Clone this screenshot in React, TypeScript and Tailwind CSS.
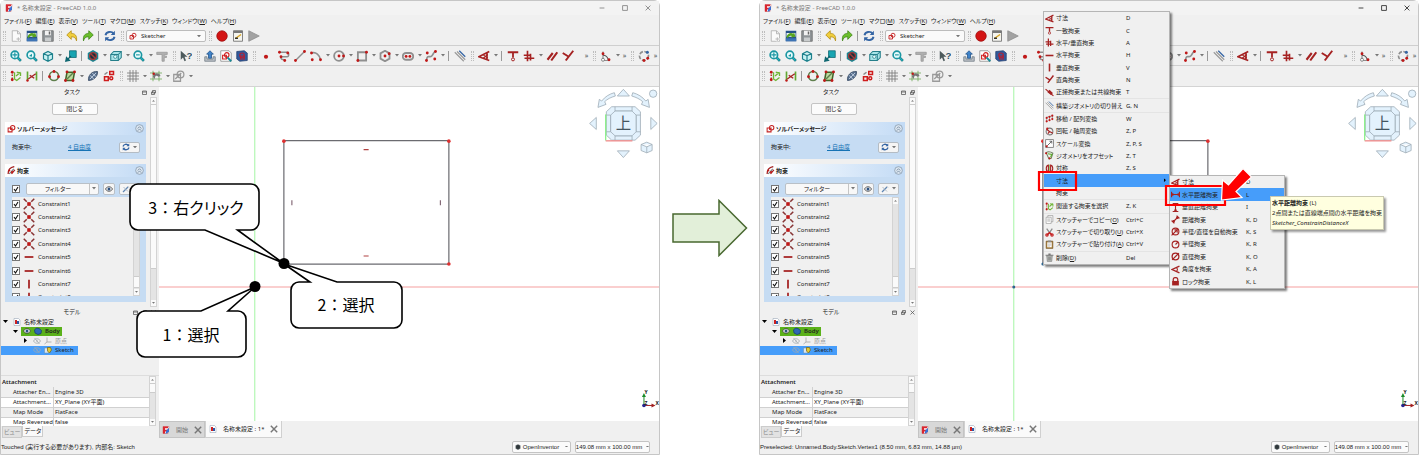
import type { ReactNode } from 'react';
import { clsx } from 'clsx';

const R = '#a52222';
const G = '#8f8f8f';

const Dot = ({ x, y, r = 1.9 }: { x: number; y: number; r?: number }) => (
  <circle cx={x} cy={y} r={r} fill="#c01818" />
);

const magnifier = (
  <>
    <path d="M9.5 9.5l5 5" stroke="#0b5c66" strokeWidth="3.4" />
    <path d="M9.5 9.5l4.600 4.600" stroke="#20aeba" strokeWidth="2.200" />
    <circle cx="6.500" cy="6.500" r="5" fill="#e8fbfc" stroke="#1b96a2" strokeWidth="2.200" />
  </>
);

const cube = (
  <path
    d="M2 5l6-3 6 3v7l-6 3-6-3zM2 5l6 2.500L14 5M8 7.500V15"
    fill="#c9f2f4"
    stroke="#1c808c"
    strokeWidth="1.600"
  />
);

const sketchMark = (
  <g fill="none" stroke="#c42020" strokeWidth="1.800">
    <path d="M2 7h7v7H2z" />
    <circle cx="10" cy="6.500" r="4" />
    <path d="M5 11l4-4" strokeWidth="1.200" />
  </g>
);

const icons: Record<string, ReactNode> = {
  app: (
    <>
      <path d="M2 1h12l-2 14H2z" fill="#fff" stroke="#c94848" strokeWidth="1" />
      <path d="M2 1h10v3.500H6v3h4V11H6v4H2z" fill="#d9252f" />
      <path d="M9 8l5-4v7l-4 4H7z" fill="#3b6fd1" />
    </>
  ),
  new: (
    <>
      <path d="M3 1h7l4 4v10H3z" fill="#fafafa" stroke="#a5a5a5" />
      <path d="M10 1v4h4" fill="none" stroke="#a5a5a5" />
      <path d="M11 9v6M8 12h6" stroke="#fff" strokeWidth="3" />
      <path d="M11 9.500v5M8.500 12h5" stroke="#b9b9b9" strokeWidth="1.400" />
    </>
  ),
  open: (
    <>
      <path d="M1 1h14v14H1z" fill="#27528a" />
      <path d="M2 4h12v5H2z" fill="#eef2f5" />
      <path d="M2 9c2-5 6-6 9-4l1-2 2 6-6 1 1-2c-2-1-4 0-6 3z" fill="#57a41f" />
      <path d="M1 11h14v4H1z" fill="#3d74b5" />
    </>
  ),
  save: (
    <>
      <path d="M1 1h14v14H1z" fill="#8f9497" stroke="#666" />
      <path d="M4 1h8v6H4z" fill="#f2f2f2" />
      <path d="M4 10h8v5H4z" fill="#c9cccd" />
      <path d="M9 2h2v4H9z" fill="#666" />
    </>
  ),
  undo: <path d="M1 6.500L7 1v3.500c5 0 8 3 7 10-1-4-3-5.500-7-5.500v3.500z" fill="#f0ce3d" stroke="#b08a10" />,
  redo: <path d="M15 6.500L9 1v3.500c-5 0-8 3-7 10 1-4 3-5.500 7-5.500v3.500z" fill="#6bbf2b" stroke="#3c8214" />,
  refresh: (
    <g fill="none" stroke="#3465a4" strokeWidth="2.600">
      <path d="M2 7c1-5 8-6 11-2M14 9c-1 5-8 6-11 2" />
      <path d="M14.500 1v5.500H9zM1.500 15V9.500H7z" fill="#3465a4" stroke="none" />
    </g>
  ),
  record: <circle cx="8" cy="8" r="7" fill="#d31414" stroke="#9c0f0f" />,
  edit: (
    <>
      <path d="M2 1h12v14H2z" fill="#f4f4ee" stroke="#777" strokeWidth="1.200" />
      <path d="M2 1h12v3H2z" fill="#777" />
      <path d="M5 11l7-5" stroke="#d9a520" strokeWidth="2" />
      <path d="M4 11h4" stroke="#222" strokeWidth="1.800" />
    </>
  ),
  play: <path d="M1 1l14 7-14 7z" fill="#a2a2a2" stroke="#8c8c8c" />,
  fit: (
    <>
      {magnifier}
      <path d="M6.500 3v7M3 6.500h7" stroke="#1b96a2" strokeWidth="1.500" />
    </>
  ),
  zoomSel: (
    <>
      {magnifier}
      <path d="M4 8l4-3v4z" fill="#1b96a2" />
    </>
  ),
  zoom: (
    <>
      {magnifier}
      <path d="M4 6.500h5" stroke="#1b96a2" strokeWidth="1.500" />
    </>
  ),
  iso: cube,
  box: (
    <>
      <path d="M1 6l4-4h10v8l-4 4H1z" fill="#a8e4e8" stroke="#257f8a" strokeWidth="1.400" />
      <path d="M1 6h10v8M11 6l4-4" fill="none" stroke="#257f8a" strokeWidth="1.400" />
      <circle cx="7" cy="9" r="2.200" fill="#e8fbfc" stroke="#257f8a" />
    </>
  ),
  align: (
    <>
      <path d="M6 1h9v9H6z" fill="#18a4b1" stroke="#0d6670" />
      <path d="M1 15l5-1-4-4zM4 12l4-4" fill="#0d6670" stroke="#0d6670" strokeWidth="1.600" />
    </>
  ),
  noSign: (
    <>
      <path d="M8 0l7 4v8l-7 4-7-4V4z" fill="#1a8592" />
      <circle cx="8" cy="8" r="4.600" fill="#1b3038" stroke="#a33a3a" strokeWidth="1.800" />
      <path d="M5 5l6 6" stroke="#a33a3a" strokeWidth="1.800" />
    </>
  ),
  measure: (
    <path d="M1 3h14v3h-4v2h3v2h-3v5H8V6H1z" fill="#b0b0b0" stroke="#989898" strokeWidth="1" />
  ),
  whats: (
    <>
      <path d="M1 1l9 8H6l2 5-2 1-2-5-3 3z" fill="#4d5a5c" />
      <text x="8.500" y="12" fontSize="13" fontWeight="bold" fill="#33556b" fontFamily="Liberation Sans">
        ?
      </text>
    </>
  ),
  leave: (
    <>
      <path d="M1 9v6h14V9h-3v3H4V9z" fill="#b9bfc4" stroke="#6f7a82" />
      <path d="M8 1l4.500 4.500H10V11H6V5.500H3.500z" fill="#3f83c9" stroke="#1e4f85" />
    </>
  ),
  viewSketch: (
    <>
      <path d="M1 1h11l3 3v11H1z" fill="#fff" stroke="#888" />
      <circle cx="9" cy="6.500" r="3" fill="none" stroke="#d02020" strokeWidth="1.500" />
      <path d="M3.500 7h5v5h-5z" fill="none" stroke="#d02020" strokeWidth="1.500" />
      <path d="M10 10l5 5" stroke="#178995" strokeWidth="2.400" />
    </>
  ),
  section: (
    <>
      <path d="M1 2l10-1 4 3v10l-10 1-4-3z" fill="#315a9c" stroke="#243f6d" />
      <circle cx="8" cy="7" r="3" fill="none" stroke="#b02035" strokeWidth="1.500" />
      <path d="M6 8h5v4H6z" fill="none" stroke="#b02035" strokeWidth="1.500" />
    </>
  ),
  point: <Dot x={8} y={9} r={2.8} />,
  polyline: (
    <>
      <path d="M2 3h10c3 0 3 6 0 6H6c-3 0-3 4 2 4" fill="none" stroke={G} strokeWidth="2" />
      <Dot x={2} y={3} />
      <Dot x={13} y={4} />
      <Dot x={4} y={9} />
      <Dot x={9} y={14} />
    </>
  ),
  line: (
    <>
      <path d="M2 14L14 2" stroke={G} strokeWidth="2" />
      <Dot x={2} y={14} />
      <Dot x={14} y={2} />
    </>
  ),
  arc: (
    <>
      <path d="M2 4c6-2 11 3 12 9" fill="none" stroke={G} strokeWidth="2.200" />
      <Dot x={2} y={4} />
      <Dot x={14} y={13} />
      <Dot x={3} y={13} />
    </>
  ),
  circle: (
    <>
      <circle cx="8" cy="8" r="6.500" fill="none" stroke={G} strokeWidth="2.400" />
      <Dot x={8} y={8} />
      <Dot x={14} y={8} />
    </>
  ),
  rect: (
    <>
      <path d="M2.500 3h11v11h-11z" fill="none" stroke={G} strokeWidth="2.400" />
      <Dot x={14} y={3} />
      <Dot x={2.5} y={14} />
    </>
  ),
  hexagon: (
    <>
      <path d="M8 1l6 3.500v7L8 15l-6-3.500v-7z" fill="none" stroke={G} strokeWidth="2.400" />
      <Dot x={8} y={8} />
      <Dot x={13.5} y={5} />
    </>
  ),
  slot: (
    <>
      <rect x="1" y="4" width="14" height="9" rx="4.500" fill="none" stroke={G} strokeWidth="2.400" />
      <Dot x={5.5} y={8.5} />
      <Dot x={10.5} y={8.5} />
    </>
  ),
  spline: (
    <>
      <path d="M2 14c1-9 4-3 7-6s2-5 5-6" fill="none" stroke={G} strokeWidth="2.200" />
      <Dot x={2} y={14} />
      <Dot x={14} y={2} />
      <Dot x={3} y={4} />
      <Dot x={13} y={12} />
    </>
  ),
  construction: (
    <>
      <path d="M1 3l12 12M4 2l11 11" stroke="#999" strokeWidth="1.500" />
      <path d="M7 1l8 8" stroke="#3465a4" strokeWidth="1.600" />
    </>
  ),
  dimension: (
    <g fill="none" stroke={R}>
      <path d="M15 2L1 9l14 5M12 4v9" strokeWidth="2.200" />
      <path d="M7 6.500l6 4M7 11l6-5" strokeWidth="1.400" />
    </g>
  ),
  coincident: (
    <g fill="none" stroke={R}>
      <path d="M1 3h14M8 3v7" strokeWidth="2.400" />
      <circle cx="8" cy="12.500" r="2" strokeWidth="1.300" />
    </g>
  ),
  horVer: <path d="M6 1v14M1 7h9M2 11h13M10 5v9" stroke={R} strokeWidth="2.200" />,
  parallel: <path d="M2 13L9 4M7 14l8-11" stroke={R} strokeWidth="2.800" />,
  perpendicular: <path d="M15 1L5 14M1 4l8 5" fill="none" stroke={R} strokeWidth="2.600" />,
  horizontal: <path d="M1 8h14" stroke={R} strokeWidth="2.800" />,
  vertical: <path d="M8 1v14" stroke={R} strokeWidth="2.800" />,
  tangent: (
    <>
      <path d="M1 2l14 12" stroke={R} strokeWidth="2" />
      <path d="M4 7l4-4 6 6-3 4z" fill={R} />
    </>
  ),
  snapAngle: (
    <>
      <path d="M4 2v12h9" fill="none" stroke={G} strokeWidth="1.600" />
      <path d="M4 7c4 0 6 2 7 6" fill="none" stroke="#555" strokeWidth="1.400" />
      <Dot x={4} y={5} />
      <Dot x={12} y={13} />
      <circle cx="4" cy="13" r="2" fill="#fff" stroke="#666" />
    </>
  ),
  ring: (
    <>
      <circle cx="8" cy="8" r="6" fill="none" stroke={G} strokeWidth="2.200" strokeDasharray="5 2" />
      <circle cx="12.500" cy="3" r="2" fill="#3465a4" />
      <Dot x={13} y={11} />
      <Dot x={8} y={14} />
    </>
  ),
  selectConstraint: (
    <>
      <path d="M3 2v12" stroke="#b33" strokeWidth="2" strokeDasharray="2 2" />
      <Dot x={3} y={3} />
      <Dot x={3} y={13} />
      <path d="M6 3v9l3 2 5-4M8 8l6-5M9 3l5 1v4" fill="none" stroke="#6fb536" strokeWidth="1.800" />
    </>
  ),
  selectElement: (
    <>
      <path d="M2 2v12M14 2v12" stroke="#62a833" strokeWidth="2.200" />
      <path d="M3 12L13 5M5 7l6 4" stroke={R} strokeWidth="1.800" />
      <Dot x={2} y={14} r={1.6} />
    </>
  ),
  greenCircle: (
    <>
      <circle cx="8" cy="8" r="6" fill="none" stroke="#5f7f4d" strokeWidth="2.200" />
      <Dot x={8} y={2} />
      <Dot x={2} y={9} />
      <Dot x={14} y={9} />
    </>
  ),
  greenRect: (
    <>
      <path d="M4 3h10l-2 11H2z" fill="#bddb9f" stroke="#43632a" strokeWidth="2" />
      <path d="M4 12l8-8" stroke="#5f7f4d" strokeWidth="2" />
      <Dot x={4} y={2.5} />
      <Dot x={14} y={2.5} />
      <Dot x={2} y={14} />
      <Dot x={12} y={14} />
    </>
  ),
  blueShape: (
    <>
      <path d="M2 14C1 7 7 1 14 2c1 6-5 12-12 12z" fill="#59718f" stroke="#2d425c" />
      <path d="M4 12l8-8M4 7l5 5M7 4l5 5" stroke="#c6d4e4" strokeWidth="1.200" />
    </>
  ),
  redShapes: (
    <g fill="none" stroke="#cf1d1d" strokeWidth="2">
      <path d="M2 9h5v5H2zM9 2h5v4H9z" />
      <circle cx="11" cy="11" r="2" />
      <path d="M2 6l4-3" stroke="#888" />
    </g>
  ),
  grid: <path d="M4 0v16M8 0v16M12 0v16M0 4h16M0 8h16M0 12h16" stroke="#777" strokeWidth="1.100" />,
  gridSnap: (
    <>
      <path d="M4 1v14M12 1v14M0 4h16M0 12h16" stroke="#72aa5c" strokeWidth="1.100" />
      <path d="M4 9c0-6 9-6 10-1l-3 1c-1-2-4-2-4 0l-1 3z" fill="#777" />
      <Dot x={5} y={5} r={1.6} />
    </>
  ),
  renderOrder: (
    <g fill="none" stroke="#9a9a9a" strokeWidth="1.700">
      <path d="M1 6h9v9H1zM3 12l8-8" />
      <circle cx="10" cy="6" r="4.500" />
    </g>
  ),
  sketcher: sketchMark,
  constraintGroup: (
    <>
      <path d="M2 14C2 7 6 2 13 1M8 14L14 7" fill="none" stroke={R} strokeWidth="2.200" />
      <path d="M4 14l8-9" stroke="#777" strokeWidth="1.800" />
      <Dot x={4} y={8} />
      <Dot x={9} y={11} />
    </>
  ),
  cross: (
    <>
      <path d="M1 1l4 4M15 1l-4 4M1 15l4-4M15 15l-4-4" stroke="#873333" strokeWidth="2" />
      <path d="M5 5l6 6M11 5l-6 6" stroke="#ad6c6c" strokeWidth="1" />
      <Dot x={8} y={8} r={2.6} />
    </>
  ),
  move: (
    <>
      <path d="M3 9v5M8 5v7M13 2v7M3 6l10-3" stroke={G} strokeWidth="1.500" />
      <Dot x={3} y={13} />
      <Dot x={3} y={7} />
      <Dot x={8} y={5} />
      <Dot x={8} y={11} />
      <Dot x={13} y={3} />
      <Dot x={13} y={9} />
    </>
  ),
  rotate: (
    <>
      <circle cx="8" cy="8" r="6" fill="none" stroke="#777" strokeWidth="1.800" />
      <path d="M3 4l5 4-3 4M8 8l6 3" fill="none" stroke={R} strokeWidth="2.200" />
      <Dot x={4} y={3} />
    </>
  ),
  scale: (
    <>
      <path d="M1 1h14v14H1z" fill="#fff" stroke="#777" strokeWidth="1.500" />
      <path d="M4 12l8-8M8 4h4v4" fill="none" stroke="#555" strokeWidth="1.500" />
      <Dot x={3} y={13} />
    </>
  ),
  offset: (
    <>
      <path d="M2 3c4-3 8-2 12 1l-3 9-4 1z" fill="none" stroke="#6c7f5e" strokeWidth="1.800" />
      <path d="M5 5l7 1-2 5" fill="none" stroke="#5bab29" strokeWidth="2" />
      <Dot x={2} y={4} />
      <Dot x={8} y={13} />
    </>
  ),
  mirror: (
    <>
      <path d="M6 2C1 3 1 13 6 14zM10 2c5 1 5 11 0 12z" fill="none" stroke={R} strokeWidth="2" />
      <path d="M8 1v14" stroke="#6eb13c" strokeWidth="1.200" />
    </>
  ),
  copy: (
    <>
      <path d="M5 1h9v11H5z" fill="#f7f7f7" stroke="#888" />
      <path d="M2 4h9v11H2z" fill="#fff" stroke="#888" />
      <path d="M4 7h5M4 9h5M4 11h5" stroke="#999" />
    </>
  ),
  cut: (
    <>
      <path d="M3 1l7 10M13 1L6 11" stroke="#8a8a8a" strokeWidth="2.200" />
      <path d="M8 8l-4 4M8 8l4 4" stroke="#c41c1c" strokeWidth="2.400" />
      <circle cx="3.500" cy="12.500" r="2" fill="none" stroke="#c41c1c" strokeWidth="2.200" />
      <circle cx="12.500" cy="12.500" r="2" fill="none" stroke="#c41c1c" strokeWidth="2.200" />
    </>
  ),
  paste: (
    <>
      <path d="M2 2h12v13H2z" fill="#a87b35" stroke="#6f5020" />
      <path d="M4 4h8v9H4z" fill="#fff" />
      <path d="M5 1h6v3H5z" fill="#888" />
      <path d="M5 7h6M5 9h6M5 11h4" stroke="#aaa" />
    </>
  ),
  trash: (
    <>
      <path d="M3 5h10l-1 10H4z" fill="#b5b9b5" stroke="#777" />
      <path d="M1 4h14M6 2h4" stroke="#777" strokeWidth="2" />
      <path d="M6 7v6M8 7v6M10 7v6" stroke="#777" />
    </>
  ),
  distX: <path d="M1 3v10M15 3v10M2 8h12M4 6L2 8l2 2M12 6l2 2-2 2" fill="none" stroke={R} strokeWidth="2" />,
  distY: <path d="M3 1h10M3 15h10M8 2v12M6 4l2-2 2 2M6 12l2 2 2-2" fill="none" stroke={R} strokeWidth="2" />,
  distance: <path d="M1 10l5 5M10 1l5 5M4 12l8-8M4 9v3h3M9 4h3v3" fill="none" stroke={R} strokeWidth="2" />,
  radiam: (
    <g fill="none" stroke={R} strokeWidth="2">
      <circle cx="8" cy="8" r="6" />
      <path d="M1 15L12 4M6 5h5v5" />
    </g>
  ),
  radius: (
    <g fill="none" stroke={R} strokeWidth="2">
      <circle cx="8" cy="8" r="6" />
      <path d="M8 8l4-4" />
    </g>
  ),
  diameter: (
    <g fill="none" stroke={R} strokeWidth="2.200">
      <circle cx="8" cy="8" r="6" />
      <path d="M2 14L14 2" />
    </g>
  ),
  angle: (
    <g fill="none" stroke={R} strokeWidth="2.400">
      <path d="M15 2L2 8l13 6" />
      <path d="M10 5c2 2 2 4 0 6" strokeWidth="1.800" />
    </g>
  ),
  lock: (
    <>
      <path d="M4 7V4c0-4 8-4 8 0v3" fill="none" stroke={R} strokeWidth="2.200" />
      <path d="M2 7h12v8H2z" fill={R} />
    </>
  ),
  doc: (
    <>
      <path d="M2 1h9l3 3v11H2z" fill="#fff" stroke="#8a98ad" />
      <path d="M4 4h4v8H4z" fill="#cf2020" />
      <path d="M8 6h4v6H8z" fill="#2c58a8" />
    </>
  ),
  body: <path d="M1 6l4-4 5 1 5 4-1 6-6 2-6-3z" fill="#2e68b4" stroke="#163c71" strokeWidth="1.500" />,
  axes: <path d="M6 1v9h9M6 10l-5 4" fill="none" stroke="#aaa" strokeWidth="1.700" />,
  sketchItem: (
    <>
      <path d="M1 4h9v10H1z" fill="#d9e6f2" stroke="#6588a5" />
      <path d="M7 3h6l2 5-4 6-4-4z" fill="#e5c82e" stroke="#75691a" strokeWidth="1.500" />
    </>
  ),
  eye: (
    <>
      <path d="M1 8c3-6 11-6 14 0-3 6-11 6-14 0z" fill="#fff" stroke="#333" strokeWidth="1.500" />
      <circle cx="8" cy="8" r="3" fill="#2a5080" />
    </>
  ),
  hidden: (
    <path d="M1 8c3-6 11-6 14 0-3 6-11 6-14 0zM3 2l10 12M6 8h4" fill="none" stroke="#a2a9ad" strokeWidth="1.500" />
  ),
  settings: (
    <>
      <path d="M2 14L12 4" stroke="#5f86b3" strokeWidth="2.600" />
      <path d="M3 4l9 9M11 2l3 3" stroke="#b3bdc7" strokeWidth="2" />
    </>
  ),
  chip: <path d="M8 1l6 3v8l-6 3-6-3V4z" fill="#30383b" stroke="#7c8588" />,
};

function Icon({ name, className = 'size-3' }: { name: string; className?: string }) {
  return (
    <svg viewBox="0 0 16 16" className={clsx('shrink-0', className)} aria-hidden="true">
      {icons[name]}
    </svg>
  );
}

const Caret = ({ className = 'w-[5px]' }: { className?: string }) => (
  <svg viewBox="0 0 10 6" className={clsx('shrink-0', className)} aria-hidden="true">
    <path d="M0 0h10L5 6z" fill="#777" />
  </svg>
);

// '::' grip, '|' separator, 'v' drop-down caret, '»' overflow
const mainTools = ['::', 'new', 'open', 'save', '::', 'undo', 'redo', '|', 'refresh', '::'];
const macroTools = ['::', 'record', 'edit', 'play'];
const viewTools = [
  '::', 'fit', 'zoomSel', 'iso', 'v', 'align', '|', 'noSign', 'v', 'box', 'v', 'zoom', 'v', 'measure',
  '::', 'whats', '::', 'leave', 'viewSketch', 'section', '::', 'point',
];
const geometryTools = [
  'polyline', 'line', 'arc', 'v', 'circle', 'v', 'rect', 'v', 'hexagon', 'v', 'slot', 'v', 'spline', 'v',
  '|', 'construction', '::', 'dimension', 'v', '|', 'coincident', 'horVer', 'v', 'parallel', 'perpendicular',
];
const trailingTools = ['»', '::', 'snapAngle', 'v', '»', '::', 'ring', '»'];
const sketchTools = [
  '::', 'selectConstraint', 'selectElement', '|', 'greenCircle', 'greenRect', 'v', 'blueShape', 'redShapes',
  '::', 'grid', 'v', 'gridSnap', 'v', 'renderOrder', 'v',
];

function Tools({ items }: { items: string[] }) {
  return (
    <div className="flex shrink-0 items-center">
      {items.map((item, i) => {
        if (item === '::')
          return (
            <span
              key={i}
              className="mr-[2px] ml-[3px] h-2.5 w-[3px] shrink-0 border-x border-dotted border-[#bdbdbd] first:ml-0"
            />
          );
        if (item === '|') return <span key={i} className="mr-[3px] ml-[2px] h-2.5 w-px shrink-0 bg-[#999]" />;
        if (item === 'v')
          return (
            <button key={i} type="button" aria-label="More" className="flex w-[7px] shrink-0 justify-center">
              <Caret className="w-1" />
            </button>
          );
        if (item === '»')
          return (
            <button key={i} type="button" className="w-[7px] shrink-0 text-center text-[7px] leading-none text-[#555]">
              »
            </button>
          );
        return (
          <button key={i} type="button" aria-label={item} className="flex w-4 shrink-0 justify-center">
            <Icon name={item} />
          </button>
        );
      })}
    </div>
  );
}

const menus = [
  ['ファイル', 'F'],
  ['編集', 'E'],
  ['表示', 'V'],
  ['ツール', 'T'],
  ['マクロ', 'M'],
  ['スケッチ', 'K'],
  ['ウィンドウ', 'W'],
  ['ヘルプ', 'H'],
];

function Header({ active }: { active: boolean }) {
  return (
    <header>
      <div className="flex h-[14px] items-center gap-1 bg-[#f3f3f3] pr-2 pl-1 text-[#777]">
        <Icon name="app" className="size-2" />
        <h1>* 名称未設定 - FreeCAD 1.0.0</h1>
        <div className={clsx('ml-auto flex gap-[17px]', active ? 'text-[#333]' : 'text-[#888]')}>
          {['M1 5h8', 'M1 1h8v8H1z', 'M1 1l8 8M9 1L1 9'].map((d, i) => (
            <button key={d} type="button" aria-label={['Minimize', 'Maximize', 'Close'][i]}>
              <svg viewBox="0 0 10 10" className="size-1.5">
                <path d={d} fill="none" stroke="currentColor" strokeWidth="1.5" />
              </svg>
            </button>
          ))}
        </div>
      </div>
      <nav className="flex h-3 items-center gap-1 pl-[3px]">
        {menus.map(([label, key]) => (
          <button key={label} type="button" className="whitespace-nowrap">
            {label}(<u>{key}</u>)
          </button>
        ))}
      </nav>
      <div className="flex h-[19px] items-center border-b border-[#cfcfcf] pl-[2px]">
        <Tools items={mainTools} />
        <div className="mr-[3px] flex h-3 w-20 shrink-0 items-center gap-1 rounded-xs border border-[#bcbcbc] bg-[#fafafa] px-[2px]">
          <Icon name="sketcher" className="size-2" />
          <select aria-label="Workbench" className="min-w-0 flex-1 appearance-none">
            <option>Sketcher</option>
          </select>
          <Caret className="mr-[2px] w-1" />
        </div>
        <Tools items={macroTools} />
      </div>
      <div className="flex h-5 items-center overflow-hidden border-b border-[#cfcfcf] pl-[2px]">
        <Tools items={viewTools} />
        <div className="ml-[2px] shrink-0">
          <Tools items={geometryTools} />
        </div>
        <div className="ml-auto shrink-0">
          <Tools items={trailingTools} />
        </div>
      </div>
      <div className="flex h-[21px] items-center border-b border-[#d4d4d4] pl-[2px]">
        <Tools items={sketchTools} />
      </div>
    </header>
  );
}

function DockTitle({ title, closable }: { title: string; closable?: boolean }) {
  return (
    <div className="relative flex h-2.5 shrink-0 items-center justify-center pr-4">
      <h2>{title}</h2>
      <div className="absolute right-[3px] flex gap-1 text-[#555]">
        {['M1 2h8v7H1zM1 4h8', 'M3 1h6v5H3zM1 4h6v5H1z', 'M1 1l8 8M9 1L1 9'].slice(0, closable ? 3 : 2).map((d) => (
          <button key={d} type="button" aria-label="Dock control">
            <svg viewBox="0 0 10 10" className="size-[5px]">
              <path d={d} fill="none" stroke="currentColor" strokeWidth="1.500" />
            </svg>
          </button>
        ))}
      </div>
    </div>
  );
}

function ScrollBar({ thumb }: { thumb: string }) {
  return (
    <div className="flex w-[7px] shrink-0 flex-col border border-[#d3d3d3] bg-[#e4e4e4]">
      <span className="flex h-[6px] items-center justify-center bg-[#fafafa]">
        <Caret className="w-[3px] rotate-180" />
      </span>
      <span className={clsx('border-y border-[#ccc] bg-[#fafafa]', thumb)} />
      <span className="mt-auto flex h-[6px] items-center justify-center bg-[#fafafa]">
        <Caret className="w-[3px]" />
      </span>
    </div>
  );
}

function PanelHead({ icon, title }: { icon: string; title: string }) {
  return (
    <div className="flex h-[13px] items-center gap-px bg-linear-to-r from-white to-[#c3dbf5] px-[2px]">
      <Icon name={icon} className="size-[9px]" />
      <h3 className="font-bold">{title}</h3>
      <button type="button" aria-label="Collapse" className="ml-auto">
        <svg viewBox="0 0 10 10" className="size-[9px]">
          <circle cx="5" cy="5" r="4.300" fill="#dbe6f1" stroke="#8395a7" strokeWidth="0.800" />
          <path d="M3 5l2-2 2 2M3 7.500l2-2 2 2" fill="none" stroke="#71869b" strokeWidth="0.900" />
        </svg>
      </button>
    </div>
  );
}

const Check = ({ label }: { label: string }) => (
  <span className="relative flex size-2 shrink-0">
    <input
      type="checkbox"
      defaultChecked
      aria-label={label}
      className="size-2 appearance-none border border-[#777] bg-white"
    />
    <svg viewBox="0 0 8 8" className="pointer-events-none absolute inset-0">
      <path d="M2 4l1.500 2L6 2" fill="none" stroke="#111" strokeWidth="1.100" />
    </svg>
  </span>
);

const constraints = ['cross', 'cross', 'cross', 'cross', 'horizontal', 'horizontal', 'vertical', 'vertical'];

function TaskPanel() {
  return (
    <div className="flex h-[210px] shrink-0">
      <div className="min-w-0 flex-1 pr-1 pl-1">
        <div className="pt-[6px] pr-[2px] text-center">
          <button type="button" className="h-3 w-[46px] rounded-xs border border-[#c4c4c4] bg-[#fbfbfb] leading-[10px]">
            閉じる
          </button>
        </div>
        <section className="mt-[7px] bg-[#c6dcf3]">
          <PanelHead icon="sketcher" title="ソルバーメッセージ" />
          <div className="flex h-6 items-center pr-1.5 pl-[7px]">
            <span>拘束中:</span>
            <a href="#dof" className="ml-auto text-[#1673b5] underline">
              4 自由度
            </a>
            <button
              type="button"
              aria-label="Update"
              className="ml-[28px] flex h-[11px] w-[21px] items-center justify-between rounded-xs border border-[#b4bcc4] bg-[#f5f5f5] px-[2px]"
            >
              <Icon name="refresh" className="size-2" />
              <Caret className="w-1" />
            </button>
          </div>
        </section>
        <section className="mt-[5px] bg-[#c6dcf3] pb-[6px]">
          <PanelHead icon="constraintGroup" title="拘束" />
          <div className="flex h-[20px] items-center gap-1 pt-[3px] pr-1.5 pl-[7px]">
            <Check label="Show all" />
            <div className="ml-[2px] flex h-3 flex-1 items-center rounded-xs border border-[#b9c0c7] bg-[#f8f8f8]">
              <select aria-label="Filter" className="w-full flex-1 appearance-none text-center">
                <option>フィルター</option>
              </select>
              <span className="flex h-full w-[9px] items-center justify-center border-l border-[#c5c5c5]">
                <Caret className="w-1" />
              </span>
            </div>
            <button
              type="button"
              aria-label="Visibility"
              className="flex size-3 items-center justify-center rounded-xs border border-[#b9c0c7] bg-[#f5f5f5]"
            >
              <Icon name="eye" className="size-2" />
            </button>
            <button
              type="button"
              aria-label="Settings"
              className="flex h-3 w-[21px] items-center justify-between rounded-xs border border-[#b9c0c7] bg-[#f5f5f5] px-[2px]"
            >
              <Icon name="settings" className="size-2" />
              <Caret className="w-1" />
            </button>
          </div>
          <div className="mr-1.5 ml-[7px] flex h-[99px] overflow-hidden bg-[#f0f0f0]">
            <ul className="flex h-[107px] flex-1 flex-col">
              {constraints.map((icon, i) => (
                <li key={i} className="flex flex-1 items-center gap-[3px]">
                  <Check label={`Constraint${i + 1}`} />
                  <span className="flex w-3 justify-center">
                    <Icon name={icon} className={icon === 'cross' ? 'size-3' : 'size-2.5'} />
                  </span>
                  <span>Constraint{i + 1}</span>
                </li>
              ))}
            </ul>
            <ScrollBar thumb="mt-[72px] h-3" />
          </div>
        </section>
      </div>
      <ScrollBar thumb="h-[165px]" />
      <span className="w-[2px]" />
    </div>
  );
}

const properties = [
  ['Attacher En...', 'Engine 3D'],
  ['Attachment...', 'XY_Plane (XY平面)'],
  ['Map Mode', 'FlatFace'],
  ['Map Reversed', 'false'],
];

function Dock() {
  return (
    <aside className="flex w-[158px] shrink-0 flex-col">
      <DockTitle title="タスク" />
      <TaskPanel />
      <DockTitle title="モデル" closable />
      <ul className="grid h-[38px] shrink-0 grid-rows-4">
        <li className="flex items-center gap-[3px] pl-[2px]">
          <Caret className="w-[5px] brightness-0" />
          <Icon name="doc" className="ml-[2px] size-2" />
          名称未設定
        </li>
        <li className="flex items-stretch gap-[3px] pl-3">
          <Caret className="w-[5px] self-center brightness-0" />
          <span className="flex items-center gap-[3px] bg-[#5ab11a] px-[2px] font-semibold">
            <Icon name="eye" className="size-2" />
            <Icon name="body" className="size-2" />
            Body
          </span>
        </li>
        <li className="flex items-center gap-[3px] pl-[22px] text-[#999]">
          <Caret className="w-[5px] -rotate-90 brightness-0" />
          <Icon name="hidden" className="ml-[2px] size-2" />
          <Icon name="axes" className="size-2" />
          原点
        </li>
        <li className="flex w-[77px] items-center gap-[3px] bg-[#469dfa] pl-[32px]">
          <Icon name="hidden" className="size-2" />
          <Icon name="sketchItem" className="size-2" />
          Sketch
        </li>
      </ul>
      <div className="mt-auto flex h-[51px] shrink-0 overflow-hidden border-t border-[#ddd] pr-[3px]">
        <table className="h-min flex-1 border-collapse text-left">
          <thead>
            <tr className="h-[11px]">
              <th colSpan={2} className="pl-px font-semibold">
                Attachment
              </th>
            </tr>
          </thead>
          <tbody>
            {properties.map(([name, value]) => (
              <tr key={name} className="h-[10px] odd:bg-[#f0f0f0] even:bg-white">
                <td className="w-[52px] border-r border-b border-[#d0d0d0] pl-3 whitespace-nowrap">{name}</td>
                <td className="border-b border-[#d0d0d0] pl-px whitespace-nowrap">{value}</td>
              </tr>
            ))}
          </tbody>
        </table>
        <ScrollBar thumb="h-2.5" />
      </div>
      <div className="flex h-3 shrink-0 items-start pl-px leading-[10px]">
        <button type="button" className="border border-[#ccc] bg-[#e2e2e2] px-px text-[#888]">
          ビュー
        </button>
        <button type="button" className="border border-t-0 border-[#ccc] bg-[#fafafa] px-px">
          データ
        </button>
      </div>
    </aside>
  );
}

function Canvas({ origin }: { origin: boolean }) {
  return (
    <svg viewBox="159 87 500 333" preserveAspectRatio="xMinYMin slice" className="min-h-0 w-full flex-1 bg-white">
      <path d="M254.500 87v334" stroke="#a5f5a5" strokeWidth="1" />
      <path d="M159 286.500h500" stroke="#f5a0a0" strokeWidth="1" />
      <path d="M283.500 140.500h164.500v123H283.500z" fill="none" stroke="#6b6b70" strokeWidth="1.200" />
      <g fill="#e03030">
        <circle cx="283.500" cy="141" r="1.800" />
        <circle cx="448" cy="141" r="1.800" />
        <circle cx="448" cy="263.500" r="1.800" />
      </g>
      <path d="M363 149.500h5M363 255.500h5" stroke="#b04040" strokeWidth="1.200" />
      <path d="M291.500 200v5M439.500 200v5" stroke="#705060" strokeWidth="1" />
      {origin && (
        <g fill="#2f6690">
          <circle cx="254.500" cy="286.500" r="1.500" />
          <circle cx="283.500" cy="263.500" r="1.500" />
        </g>
      )}
      <g transform="translate(570 80) scale(.3333)" fill="#e3f2fd" stroke="#9aa9b3" strokeWidth="2.300">
        <path d="M156 28l18 20h-36zM156 232l18-20h-36zM55 130l20-18v36zM257 130l-19-18v36z" />
        <path d="M129 38l3 10c-14 4-24 9-32 17l4 8-24 9 4-24 7 5c10-13 23-21 38-25z" />
        <path d="M184 38l-3 10c14 4 24 9 33 17l-4 8 24 9-4-24-7 5c-10-13-24-21-39-25z" />
        <circle cx="245" cy="41" r="11" />
        <path d="M121 80h70l16 15v70l-16 15h-70l-16-15V95z" />
        <path d="M105 105h13v50h-13M207 105h-13v50h13M131 80v13h51V80M131 180v-13h51v13" fill="none" />
        <path d="M131 93h51l12 12v50l-12 12h-51l-13-12v-50z" />
        <path d="M226 186l16 7v18l-16 7-17-7v-18zM209 193l17 7 16-7M226 200v18" />
        <path d="M103 103v78" stroke="#8df08d" strokeWidth="4" />
        <path d="M103 182h80" stroke="#f08c8c" strokeWidth="4" />
        <text x="156" y="147" textAnchor="middle" fontSize="46" fill="#455560" stroke="none">
          上
        </text>
      </g>
      <path d="M642.500 404v-10" stroke="#1c8c2a" strokeWidth="1" />
      <path d="M642.500 392l2 4h-4z" fill="#1c8c2a" />
      <path d="M643 404.500h8" stroke="#a22020" strokeWidth="1" />
      <path d="M654 404.500l-4-2v4z" fill="#a22020" />
      <circle cx="642.500" cy="404.500" r="1.800" fill="#252590" />
      <g fontSize="5" fontWeight="bold" fill="#222">
        <text x="643" y="393">Y</text>
        <text x="643" y="404">Z</text>
        <text x="654" y="404">X</text>
      </g>
    </svg>
  );
}

const TabClose = () => (
  <svg viewBox="0 0 10 10" className="size-2">
    <path d="M1 1l8 8M9 1L1 9" stroke="#777" strokeWidth="1.800" />
  </svg>
);

function DocTabs() {
  return (
    <div className="flex h-[17px] shrink-0">
      <div className="flex items-center border border-[#c4c4c4] bg-[#d8d8d8] px-[2px] text-[#777]">
        <Icon name="app" className="size-2" />
        <span className="px-[6px]">開始</span>
        <button type="button" aria-label="Close tab">
          <TabClose />
        </button>
      </div>
      <div className="flex items-center border border-t-0 border-[#d0d0d0] bg-[#fafafa] px-[3px]">
        <Icon name="doc" className="size-2" />
        <span className="px-[6px]">名称未設定 : 1*</span>
        <button type="button" aria-label="Close tab">
          <TabClose />
        </button>
      </div>
    </div>
  );
}

function AppWindow({ status, active = false, children }: { status: string; active?: boolean; children?: ReactNode }) {
  return (
    <section className="relative flex min-w-0 flex-1 flex-col rounded-t-md border border-[#c6c6c6] bg-[#f0f0f0]">
      <Header active={active} />
      <div className="flex flex-1">
        <Dock />
        <main className="flex min-w-0 flex-1 flex-col">
          <Canvas origin={active} />
          <DocTabs />
        </main>
      </div>
      <footer className="flex h-4 shrink-0 items-center gap-1 pt-px pr-[9px] font-['Liberation_Sans','Noto_Sans_CJK_JP',sans-serif]">
        <p className="mr-auto whitespace-nowrap">{status}</p>
        <button
          type="button"
          className="flex h-3 w-[59px] items-center justify-center gap-[2px] rounded-xs border border-[#c4c4c4] bg-[#fbfbfb]"
        >
          <Icon name="chip" className="size-[6px]" />
          OpenInventor
          <Caret className="ml-1 w-[3px]" />
        </button>
        <button
          type="button"
          className="flex h-3 w-[75px] items-center justify-center gap-1 rounded-xs border border-[#c4c4c4] bg-[#fbfbfb] whitespace-nowrap"
        >
          149.08 mm x 100.00 mm
          <Caret className="w-[3px]" />
        </button>
      </footer>
      {children}
    </section>
  );
}

function Callouts() {
  return (
    <svg viewBox="0 0 660 455" className="pointer-events-none absolute -top-px -left-px w-[660px]">
      <g fill="#fff" stroke="#000" strokeWidth="1.600">
        <path d="M138 184h113a8 8 0 0 1 8 8v30a8 8 0 0 1-8 8h-13.500L283 263 205 230h-67a8 8 0 0 1-8-8v-30a8 8 0 0 1 8-8z" />
        <path d="M299 282h11L284 264l53 18h57a8 8 0 0 1 8 8v30a8 8 0 0 1-8 8h-95a8 8 0 0 1-8-8v-30a8 8 0 0 1 8-8z" />
        <path d="M145 311h56l54-24-27 24h10a8 8 0 0 1 8 8v30a8 8 0 0 1-8 8h-93a8 8 0 0 1-8-8v-30a8 8 0 0 1 8-8z" />
      </g>
      <circle cx="255" cy="286.500" r="5.500" />
      <circle cx="284" cy="263.500" r="5.500" />
      <g fontSize="16" textAnchor="middle" className="font-['Noto_Sans_CJK_JP',sans-serif]">
        <text x="196" y="214">
          3<tspan className="[font-feature-settings:normal]">：</tspan>右クリック
        </text>
        <g className="[font-feature-settings:normal]">
          <text x="346" y="311">2：選択</text>
          <text x="191" y="341">1：選択</text>
        </g>
      </g>
    </svg>
  );
}

type Entry = { icon?: string; label: string; key?: string; keys?: string; open?: boolean; line?: boolean };

const contextMenu: Entry[] = [
  { icon: 'dimension', label: '寸法', keys: 'D' },
  { icon: 'coincident', label: '一致拘束', keys: 'C' },
  { icon: 'horVer', label: '水平/垂直拘束', keys: 'A' },
  { icon: 'horizontal', label: '水平拘束', keys: 'H' },
  { icon: 'vertical', label: '垂直拘束', keys: 'V' },
  { icon: 'perpendicular', label: '直角拘束', keys: 'N' },
  { icon: 'tangent', label: '正接拘束または共線拘束', keys: 'T' },
  { icon: 'construction', label: '構築ジオメトリの切り替え', keys: 'G, N', line: true },
  { icon: 'move', label: '移動 / 配列変換', keys: 'W', line: true },
  { icon: 'rotate', label: '回転 / 軸周変換', keys: 'Z, P' },
  { icon: 'scale', label: 'スケール変換', keys: 'Z, P, S' },
  { icon: 'offset', label: 'ジオメトリをオフセット', keys: 'Z, T' },
  { icon: 'mirror', label: '対称', keys: 'Z, S' },
  { label: '寸法', open: true },
  { label: '拘束' },
  { icon: 'selectConstraint', label: '関連する拘束を選択', keys: 'Z, K', line: true },
  { icon: 'copy', label: 'スケッチャーでコピー', key: 'O', keys: 'Ctrl+C', line: true },
  { icon: 'cut', label: 'スケッチャーで切り取り', key: 'U', keys: 'Ctrl+X' },
  { icon: 'paste', label: 'スケッチャーで貼り付け', key: 'A', keys: 'Ctrl+V' },
  { icon: 'trash', label: '削除', key: 'D', keys: 'Del', line: true },
];

const dimensionMenu: Entry[] = [
  { icon: 'dimension', label: '寸法', keys: 'D' },
  { icon: 'distX', label: '水平距離拘束', keys: 'L', open: true },
  { icon: 'distY', label: '垂直距離拘束', keys: 'I' },
  { icon: 'distance', label: '距離拘束', keys: 'K, D' },
  { icon: 'radiam', label: '半径/直径を自動拘束', keys: 'K, S' },
  { icon: 'radius', label: '半径拘束', keys: 'K, R' },
  { icon: 'diameter', label: '直径拘束', keys: 'K, O' },
  { icon: 'angle', label: '角度を拘束', keys: 'K, A' },
  { icon: 'lock', label: 'ロック拘束', keys: 'K, L' },
];

function Menu({ entries, className, keyWidth }: { entries: Entry[]; className: string; keyWidth: string }) {
  return (
    <ul
      role="menu"
      className={clsx(
        'absolute flex flex-col border border-[#b5b5b5] bg-[#f0f0f0] shadow-[2px_2px_2px_#00000080]',
        className,
      )}
    >
      {entries.map(({ icon, label, key, keys, open, line }) => (
        <li key={label + keys} className={clsx('flex min-h-0 flex-1', line && 'border-t border-[#e4e4e4]')}>
          <button
            type="button"
            role="menuitem"
            className={clsx('flex flex-1 items-center pl-px text-left whitespace-nowrap', open && 'bg-[#469dfa]')}
          >
            <span className="mr-[2px] flex w-[9px] shrink-0">{icon && <Icon name={icon} className="size-[9px]" />}</span>
            <span className="flex-1">
              {label}
              {key && (
                <>
                  (<u>{key}</u>)
                </>
              )}
            </span>
            <span className={clsx('shrink-0', keyWidth)}>{keys}</span>
            {open && !keys && <Caret className="mr-[2px] w-1 -rotate-90 brightness-0" />}
          </button>
        </li>
      ))}
    </ul>
  );
}

function MenuOverlay() {
  return (
    <>
      <Menu entries={contextMenu} className="top-[10px] left-[283px] h-[254px] w-[127px]" keyWidth="w-[43px]" />
      <Menu entries={dimensionMenu} className="top-[174px] left-[409px] h-[114px] w-[116px]" keyWidth="w-[38px]" />
      <div
        role="tooltip"
        className="absolute top-[195px] left-[510px] border border-[#c9c9b0] bg-[#ffffdf] px-px py-px leading-[10px] whitespace-nowrap shadow-[2px_2px_2px_#00000066]"
      >
        <p>
          <b>水平距離拘束</b> (L)
        </p>
        <p>2点間または直線端点間の水平距離を拘束</p>
        <p className="italic">Sketcher_ConstrainDistanceX</p>
      </div>
      <svg viewBox="0 0 660 455" className="pointer-events-none absolute -top-px -left-px w-[660px]">
        <path d="M280 172h37v18h-37zM407 186h59v19h-59z" fill="none" stroke="#f00" strokeWidth="2.200" />
        <path
          d="M484 168.500l8.500 8.500-15.500 14.500 6 6-20.500 2.500 1-20 6 5z"
          fill="#f00"
          stroke="#fff"
          strokeWidth="1.200"
        />
      </svg>
    </>
  );
}

export default function App() {
  return (
    <div
      lang="ja"
      className="flex min-h-screen bg-white font-['Noto_Sans','Noto_Sans_CJK_JP',sans-serif] text-[6px] leading-none text-[#222] [font-feature-settings:'palt']"
    >
      <AppWindow status="Touched (実行する必要があります), 内部名: Sketch">
        <Callouts />
      </AppWindow>
      <div className="flex w-[99px] shrink-0 items-center justify-center">
        <svg viewBox="0 0 76 58" className="w-[76px]" role="img" aria-label="Next step">
          <path d="M1 15h46V1.500L74.500 29 47 56.500V43H1z" fill="#e2efd9" stroke="#48682f" strokeWidth="1.500" />
        </svg>
      </div>
      <AppWindow active status="Preselected: Unnamed.Body.Sketch.Vertex1 (8.50 mm, 6.83 mm, 14.88 µm)">
        <MenuOverlay />
      </AppWindow>
    </div>
  );
}
